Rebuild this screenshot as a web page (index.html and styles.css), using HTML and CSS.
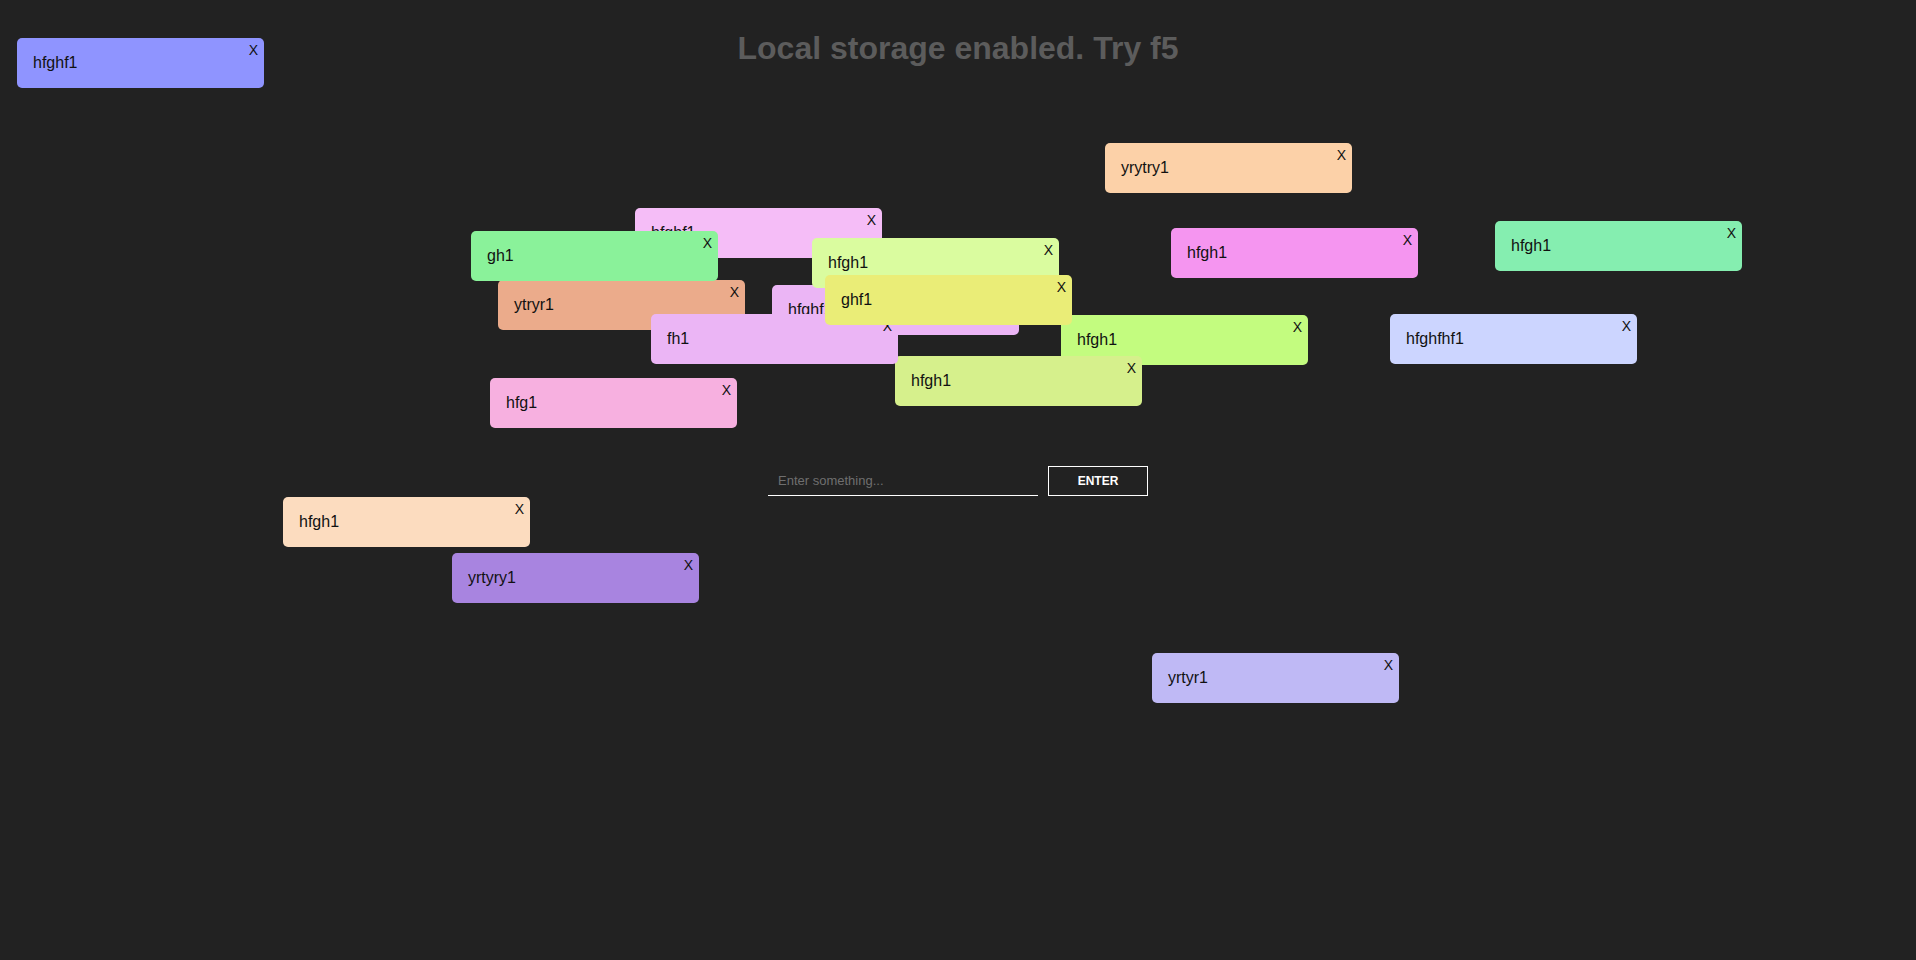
FILE: index.html
```html
<!DOCTYPE html>
<html lang="en">
<head>
<meta charset="utf-8">
<title>Notes</title>
<link rel="stylesheet" href="styles.css">
</head>
<body>
<main class="app">
  <h1 class="title">Local storage enabled. Try f5</h1>
  <form class="entry">
    <input class="entry-input" type="text" placeholder="Enter something...">
    <button class="entry-btn" type="button">ENTER</button>
  </form>
</main>
<div class="board">
  <div class="note" style="left:17px;top:38px;background:#8f94ff"><span class="note-text">hfghf1</span><span class="note-close">X</span></div>
  <div class="note" style="left:1105px;top:143px;background:#fcd1a8"><span class="note-text">yrytry1</span><span class="note-close">X</span></div>
  <div class="note" style="left:635px;top:208px;background:#f5bdf7"><span class="note-text">hfghf1</span><span class="note-close">X</span></div>
  <div class="note" style="left:498px;top:280px;background:#ebab8b"><span class="note-text">ytryr1</span><span class="note-close">X</span></div>
  <div class="note" style="left:471px;top:231px;background:#8af29a"><span class="note-text">gh1</span><span class="note-close">X</span></div>
  <div class="note" style="left:772px;top:285px;background:#ebb5f5"><span class="note-text">hfghf1</span><span class="note-close">X</span></div>
  <div class="note" style="left:1061px;top:315px;background:#c3fc7f"><span class="note-text">hfgh1</span><span class="note-close">X</span></div>
  <div class="note" style="left:895px;top:356px;background:#d6f08c"><span class="note-text">hfgh1</span><span class="note-close">X</span></div>
  <div class="note" style="left:651px;top:314px;background:#ebb5f5"><span class="note-text">fh1</span><span class="note-close">X</span></div>
  <div class="note" style="left:812px;top:238px;background:#dafc9f"><span class="note-text">hfgh1</span><span class="note-close">X</span></div>
  <div class="note" style="left:825px;top:275px;background:#eaed77"><span class="note-text">ghf1</span><span class="note-close">X</span></div>
  <div class="note" style="left:490px;top:378px;background:#f7b0e0"><span class="note-text">hfg1</span><span class="note-close">X</span></div>
  <div class="note" style="left:1171px;top:228px;background:#f595f0"><span class="note-text">hfgh1</span><span class="note-close">X</span></div>
  <div class="note" style="left:1495px;top:221px;background:#85eeb0"><span class="note-text">hfgh1</span><span class="note-close">X</span></div>
  <div class="note" style="left:1390px;top:314px;background:#ccd5ff"><span class="note-text">hfghfhf1</span><span class="note-close">X</span></div>
  <div class="note" style="left:283px;top:497px;background:#fcdcbf"><span class="note-text">hfgh1</span><span class="note-close">X</span></div>
  <div class="note" style="left:452px;top:553px;background:#a884e0"><span class="note-text">yrtyry1</span><span class="note-close">X</span></div>
  <div class="note" style="left:1152px;top:653px;background:#bfb9f5"><span class="note-text">yrtyr1</span><span class="note-close">X</span></div>
</div>
</body>
</html>
```
FILE: styles.css
```css
html, body {
  margin: 0;
  padding: 0;
  height: 100%;
}
body {
  background: #222222;
  font-family: "Liberation Sans", Arial, sans-serif;
  color: #111;
  position: relative;
  overflow: hidden;
}
.app {
  display: flex;
  flex-direction: column;
  align-items: center;
  padding-top: 30px;
}
.title {
  margin: 0;
  font-size: 32px;
  font-weight: bold;
  color: #5c5c5c;
  line-height: 37px;
}
.entry {
  margin-top: 399px;
  display: flex;
  align-items: flex-end;
  gap: 10px;
}
.entry-input {
  box-sizing: border-box;
  width: 270px;
  height: 30px;
  padding: 0 10px;
  background: transparent;
  border: none;
  border-bottom: 1px solid #ffffff;
  color: #ffffff;
  font-family: "Liberation Sans", Arial, sans-serif;
  font-size: 13px;
  outline: none;
}
.entry-input::placeholder {
  color: #6f6f6f;
}
.entry-btn {
  box-sizing: border-box;
  width: 100px;
  height: 30px;
  background: transparent;
  border: 1px solid #ffffff;
  color: #ffffff;
  font-family: "Liberation Sans", Arial, sans-serif;
  font-size: 12px;
  font-weight: bold;
  cursor: pointer;
}
.board {
  position: absolute;
  inset: 0;
  pointer-events: none;
}
.note {
  position: absolute;
  box-sizing: border-box;
  width: 247px;
  height: 50px;
  border-radius: 5px;
  display: flex;
  align-items: center;
  padding-left: 16px;
  padding-bottom: 1px;
  pointer-events: auto;
}
.note-text {
  font-size: 16px;
  color: #111111;
}
.note-close {
  position: absolute;
  top: 4px;
  right: 6px;
  font-size: 14px;
  color: #111111;
  cursor: pointer;
}
```
